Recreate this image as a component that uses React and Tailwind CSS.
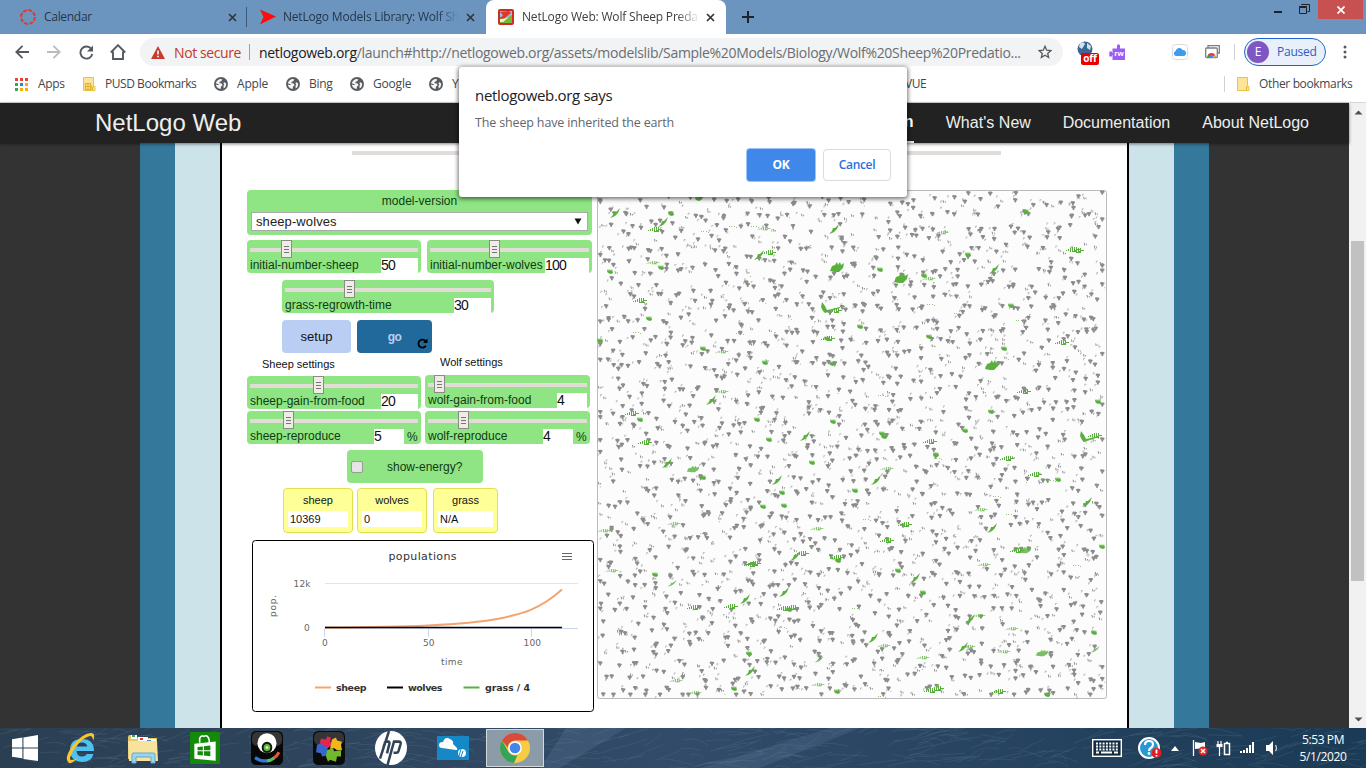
import React from "react";

const UI = "font-['Open_Sans','Noto_Sans',sans-serif]";
const ARIAL = "font-['Liberation_Sans',Arial,sans-serif]";

/* ---------- browser chrome ---------- */

function Close({ className = "" }) {
  return (
    <svg width="9" height="9" viewBox="0 0 9 9" className={className}>
      <path d="M1 1l7 7M8 1l-7 7" stroke="#30363c" strokeWidth="1.7" />
    </svg>
  );
}

function TabStrip() {
  return (
    <div className="flex h-[34px] items-stretch bg-[#6b95bf] text-[12px] text-[#25364a]">
      <div className="flex w-[247px] items-center pl-[20px]">
        <svg width="16" height="16" viewBox="0 0 16 16">
          <circle cx="8" cy="8" r="6.9" fill="none" stroke="#e0382b" strokeWidth="2" strokeDasharray="3.9 1.52" />
        </svg>
        <span className="ml-[8px] w-[180px] tracking-[-0.3px]">Calendar</span>
        <Close className="ml-[4px]" />
        <span className="ml-auto h-[20px] w-px bg-[#3d5a7a]" />
      </div>
      <div className="flex w-[239px] items-center pl-[12px]">
        <svg width="17" height="16" viewBox="0 0 17 16">
          <path d="M1 0.500L17 7.500L1 15.500L4.500 8z" fill="#fb0d0d" />
        </svg>
        <span className="ml-[7px] w-[176px] overflow-hidden whitespace-nowrap tracking-[-0.2px] [mask-image:linear-gradient(to_right,black_155px,transparent_176px)]">
          NetLogo Models Library: Wolf Sh
        </span>
        <Close className="ml-[7px]" />
      </div>
      <div className="flex w-[240px] items-center rounded-t-[8px] bg-white pl-[12px] text-[#3c4043]">
        <svg width="16" height="16" viewBox="0 0 16 16">
          <rect width="16" height="16" rx="2" fill="#cf2d22" />
          <path d="M2 2h12v5L8 10L2 8z" fill="#87c3e8" />
          <path d="M2 9q6 1 12-3v8H2z" fill="#75b832" />
          <path d="M2 10q5 0 9-2l-6 5H2z" fill="#eef4df" />
          <path d="M2 3l9-1 2 2-6 5-5 1 3-4z" fill="#e5352a" />
        </svg>
        <span className="ml-[8px] w-[178px] overflow-hidden whitespace-nowrap tracking-[-0.18px] [mask-image:linear-gradient(to_right,black_155px,transparent_178px)]">
          NetLogo Web: Wolf Sheep Preda
        </span>
        <Close className="ml-[6px]" />
      </div>
      <svg width="12" height="12" viewBox="0 0 12 12" className="mt-[11px] ml-[16px]">
        <path d="M6 0v12M0 6h12" stroke="#1d232b" strokeWidth="2" />
      </svg>
      <div className="ml-auto flex items-start">
        <svg width="36" height="19" viewBox="0 0 36 19" fill="none" stroke="#1e2227">
          <path d="M0 12h8" strokeWidth="2" />
          <path d="M25.500 7.500h7v6h-7zM25 6.500h8" />
          <path d="M27.500 5v-0.500h8v7h-2" />
        </svg>
        <div className="ml-[8px] flex h-[19px] w-[45px] items-center justify-center bg-[#c75050]">
          <svg width="8" height="8" viewBox="0 0 8 8">
            <path d="M0.500 0.500l7 7M7.500 0.500l-7 7" stroke="#fff" strokeWidth="1.800" />
          </svg>
        </div>
        <span className="w-[3px]" />
      </div>
    </div>
  );
}

function Toolbar() {
  return (
    <div className="flex h-[36px] items-center bg-white">
      <svg width="14" height="14" viewBox="0 0 14 14" fill="none" stroke="#55595e" strokeWidth="1.800" className="ml-[15px]">
        <path d="M14 7H1.500M7.500 0.800L1.300 7l6.200 6.200" />
      </svg>
      <svg width="14" height="14" viewBox="0 0 14 14" fill="none" stroke="#babcbe" strokeWidth="1.800" className="ml-[18px]">
        <path d="M0 7h12.500M6.500 0.800L12.700 7l-6.200 6.200" />
      </svg>
      <svg width="15" height="15" viewBox="0 0 15 15" className="ml-[18px]">
        <path d="M12.300 4A6 6 0 1 0 13.300 9" fill="none" stroke="#55595e" strokeWidth="1.900" />
        <path d="M14 0.500v6H8z" fill="#55595e" />
      </svg>
      <svg width="16" height="16" viewBox="0 0 16 16" className="ml-[16px]">
        <path d="M0.800 8.500L8 1.200l7.200 7.300M3 7.500V15h10V7.500" fill="none" stroke="#55595e" strokeWidth="1.900" />
      </svg>
      <div className="ml-[14px] flex h-[28px] w-[923px] items-center rounded-full bg-[#f1f3f4] pl-[11px] text-[14px] text-[#6a6e73]">
        <svg width="14" height="13" viewBox="0 0 14 13">
          <path d="M7 0l7 13H0z" fill="#c93a2c" />
          <path d="M7 4.500v4M7 9.800v1.500" stroke="#fff" strokeWidth="1.600" />
        </svg>
        <span className="ml-[9px] w-[66px] whitespace-nowrap tracking-[-0.4px] text-[#c5362a]">Not secure</span>
        <span className="ml-[9px] h-[16px] w-px bg-[#9b9fa3]" />
        <span className="ml-[9px] w-[762px] whitespace-nowrap tracking-[-0.31px]">
          <span className="text-[#202124]">netlogoweb.org</span>
          /launch#http://netlogoweb.org/assets/modelslib/Sample%20Models/Biology/Wolf%20Sheep%20Predatio...
        </span>
        <svg width="14" height="14" viewBox="0 0 14 14" className="ml-[17px]">
          <path d="M7 1.300l1.700 3.900 4.200.4-3.200 2.800.95 4.100L7 10.300l-3.650 2.200.95-4.100L1.100 5.600l4.200-.4z" fill="none" stroke="#55595e" strokeWidth="1.300" />
        </svg>
      </div>
      <div className="relative ml-[14px] h-[22px] w-[22px]">
        <svg width="16" height="16" viewBox="0 0 16 16">
          <circle cx="8" cy="8" r="7.500" fill="#3c6795" />
          <path d="M3 2q4-2 5 1L5 8 2 6zM10 2l4 3-1 4-3-2z" fill="#d5e1ec" />
        </svg>
        <span className="absolute top-[12px] left-[4px] flex h-[12px] w-[18px] items-center justify-center rounded-[2px] bg-[#e80000] pb-px text-[10px] font-bold tracking-[-0.2px] text-white">off</span>
      </div>
      <svg width="16" height="16" viewBox="0 0 16 16" className="ml-[10px]">
        <path d="M3.500 4.500H8V1.800a1.500 1.500 0 0 1 3 0v2.700h5V16H3.500v-5H3v1.500H0.300V7.500H3V9h.5z" fill="#9c5cf5" />
        <text x="5.300" y="11.500" fontSize="8" fontWeight="700" fill="#fff" fontFamily="Liberation Sans, sans-serif">rw</text>
      </svg>
      <svg width="16" height="16" viewBox="0 0 16 16" className="ml-[47px]">
        <rect x="0.500" y="0.500" width="15" height="15" rx="3" fill="#fff" stroke="#d8dbde" />
        <path d="M4 12a2.500 2.500 0 0 1-.3-4.900 3.600 3.600 0 0 1 6.800-1 3.100 3.100 0 0 1 1.700 5.900z" fill="#3e9ced" />
      </svg>
      <svg width="15" height="14" viewBox="0 0 15 14" className="ml-[17px]">
        <path d="M3 3V0.700h11.300V8H12" fill="none" stroke="#7c7f82" strokeWidth="1.300" />
        <rect x="0.700" y="3" width="11.600" height="9.500" rx="1" fill="#fff" stroke="#7c7f82" strokeWidth="1.300" />
        <path d="M2.500 12a4 4 0 0 1 8 0z" fill="#de4335" />
        <path d="M2.500 12.500a4 4 0 0 1 1.200-3L6 12.500z" fill="#2da44e" />
        <path d="M7 12.500l2.500-2.500 1 2.500z" fill="#f5c02c" />
        <circle cx="6.500" cy="11.300" r="1.600" fill="#4285f4" />
      </svg>
      <span className="ml-[14px] h-[16px] w-px bg-[#cfd1d4]" />
      <div className="ml-[9px] flex h-[28px] w-[82px] items-center rounded-full border border-[#1d66d1] bg-[#e9f0fb] pl-[2px]">
        <span className="flex h-[22px] w-[22px] items-center justify-center rounded-full bg-[#7e57c2] text-[12px] text-white">E</span>
        <span className="ml-[8px] text-[12px] tracking-[-0.25px] text-[#285fc0]">Paused</span>
      </div>
      <svg width="4" height="14" viewBox="0 0 4 14" fill="#55595e" className="ml-[17px]">
        <circle cx="2" cy="2" r="1.500" /><circle cx="2" cy="7" r="1.500" /><circle cx="2" cy="12" r="1.500" />
      </svg>
    </div>
  );
}

function Globe({ className = "" }) {
  return (
    <svg width="14" height="14" viewBox="0 0 14 14" className={className}>
      <circle cx="7" cy="7" r="7" fill="#575b60" />
      <path d="M1.800 6.300Q2.500 3 6 1.900L8.200 2.300 7.300 4.200 5.600 4.700 5.400 6.200 7.700 6.500 8.600 8.300 7 9.500 6.600 12Q2.500 11.500 1.800 7.600L4.300 8.200 4.800 7.200zM10.600 5.200L12.300 6.800Q12.200 10 9.700 11.500L9.500 9.300 10.300 7.300 9.200 6z" fill="#f7f7f7" />
    </svg>
  );
}

function Folder({ grid, className = "" }) {
  return (
    <svg width="13" height="14" viewBox="0 0 13 14" className={className}>
      <path d="M0.500 0.500h10v9h1.500v4H0.500z" fill="#fee596" stroke="#ebc443" />
      <path d="M9.500 13V10h1" fill="none" stroke="#dfb12f" />
      {grid && <path d="M2.500 6.500h5v6h-5zM5 6v6M2.500 9.500h6M8 8v4.500" fill="none" stroke="#dfb12f" strokeWidth="1.200" />}
    </svg>
  );
}

const appDots = ["#ea4335", "#ea4335", "#ea4335", "#34a853", "#1f87f0", "#fbac00", "#34a853", "#fbac00", "#fbac00"];

function Bookmarks() {
  return (
    <div className="flex h-[33px] items-center border-b border-[#d7d8da] bg-white pb-[4px] text-[12px] tracking-[-0.1px] whitespace-nowrap text-[#43474c]">
      <div className="ml-[15px] grid grid-cols-3 gap-[2px]">
        {appDots.map((c, i) => (
          <span key={i} className="h-[3px] w-[3px]" style={{ backgroundColor: c }} />
        ))}
      </div>
      <span className="ml-[10px] w-[27px] tracking-[-0.3px]">Apps</span>
      <Folder grid className="ml-[18px]" />
      <span className="ml-[9px] w-[92px] tracking-[-0.45px]">PUSD Bookmarks</span>
      <Globe className="ml-[17px]" />
      <span className="ml-[9px] w-[31px] tracking-[-0.2px]">Apple</span>
      <Globe className="ml-[18px]" />
      <span className="ml-[9px] w-[24px] tracking-[-0.3px]">Bing</span>
      <Globe className="ml-[17px]" />
      <span className="ml-[9px] w-[40px] tracking-[-0.2px]">Google</span>
      <Globe className="ml-[16px]" />
      <span className="ml-[9px] w-[33px]">Y</span>
      <span className="mr-auto ml-[420px] tracking-[-0.4px]">VUE</span>
      <span className="mr-[12px] h-[16px] w-px bg-[#cfd1d4]" />
      <Folder />
      <span className="mr-[13px] ml-[9px] w-[94px] tracking-[-0.35px]">Other bookmarks</span>
    </div>
  );
}

function Dialog() {
  return (
    <div className="absolute top-[67px] left-[459px] z-20 flex h-[130px] w-[448px] flex-col rounded-[3px] bg-white px-[16px] pb-[16px] shadow-[0_1px_4px_1px_rgba(0,0,0,0.55)]">
      <p className="mt-[18px] text-[15px] leading-[20px] tracking-[-0.32px] text-[#202124]">netlogoweb.org says</p>
      <p className="mt-[9px] text-[12.500px] leading-[18px] tracking-[-0.15px] text-[#63676c]">The sheep have inherited the earth</p>
      <div className="mt-auto flex justify-end gap-[8px] text-[12px]">
        <button className="h-[32px] w-[68px] rounded-[3px] bg-[#3f88ea] font-bold tracking-[-0.3px] text-white ring-1 ring-[#9fc4f7]">OK</button>
        <button className="h-[32px] w-[68px] rounded-[4px] border border-[#dadce0] bg-white font-semibold tracking-[-0.35px] text-[#2a6fe0]">Cancel</button>
      </div>
    </div>
  );
}

/* ---------- model widgets ---------- */

function Slider({ className, knob, label, value, inputClass, unit }) {
  return (
    <div className={`h-[33px] shrink-0 rounded-[4px] bg-[#8fe584] px-[3px] text-[12px] text-[#123a12] ${className}`}>
      <div className="relative mt-[8px] h-[4px] bg-[#e1ddd6]">
        <div className="absolute -top-[8px] flex h-[18px] w-[11px] flex-col items-center justify-center gap-[2px] border border-[#8b8b87] bg-[#efece8]" style={{ left: knob }}>
          <span className="h-px w-[5px] bg-[#777]" />
          <span className="h-px w-[5px] bg-[#777]" />
          <span className="h-px w-[5px] bg-[#777]" />
        </div>
      </div>
      <div className="mt-[6px] flex h-[15px] items-stretch whitespace-nowrap">
        <span className="mr-auto leading-[14px]">{label}</span>
        <span className={`bg-white text-[14px] leading-[15px] tracking-[-0.8px] text-[#111] ${inputClass}`}>{value}</span>
        {unit && <span className="ml-[3px] w-[11px] leading-[16px]">{unit}</span>}
      </div>
    </div>
  );
}

function Monitor({ className, name, value }) {
  return (
    <div className={`h-[45px] rounded-[4px] border border-[#e3e04d] bg-[#ffff98] px-[4px] text-[11px] text-[#111] ${className}`}>
      <div className="mt-[4px] text-center leading-[15px]">{name}</div>
      <div className="mt-[3px] h-[16px] bg-white pl-[2px] leading-[16px]">{value}</div>
    </div>
  );
}

function Plot() {
  return (
    <svg width="342" height="172" viewBox="0 0 342 172" className="mt-[7px] ml-[5px]" fontFamily="'DejaVu Sans', sans-serif" fontSize="9" fill="#666">
      <rect x="0.500" y="0.500" width="341" height="171" rx="3" fill="#fff" stroke="#000" />
      <text x="136.500" y="20" fontSize="11" fill="#333" textLength="68">populations</text>
      <path d="M310 13.500h10M310 16.500h10M310 19.500h10" stroke="#666" />
      <path d="M73 43.500h253" stroke="#e3e3e3" />
      <path d="M72.500 97V88.500H326M176.500 88v9M279.500 88v9" fill="none" stroke="#ccd6eb" />
      <text x="41.500" y="47" textLength="17">12k</text>
      <text x="52" y="91">0</text>
      <text x="70" y="106">0</text>
      <text x="171" y="106" textLength="11.500">50</text>
      <text x="271.500" y="106" textLength="17.500">100</text>
      <text x="189" y="125" textLength="21.500">time</text>
      <text transform="translate(23.500 77) rotate(-90)" textLength="22">pop.</text>
      <path d="M73 87.500C110 87.300 145 87 176 85.500C205 84 225 82.700 245 79C270 74 287 70 310 49.500" fill="none" stroke="#f4a470" strokeWidth="2" />
      <path d="M73 87.500h237" stroke="#000" strokeWidth="1.500" />
      <path d="M63 147.500h16" stroke="#f4a470" strokeWidth="2" />
      <path d="M135 147.500h16" stroke="#000" strokeWidth="2" />
      <path d="M211.500 147.500h16" stroke="#59b03c" strokeWidth="2" />
      <g fontWeight="700" fill="#333" fontSize="9.500">
        <text x="84" y="151" textLength="30.500">sheep</text>
        <text x="156" y="151" textLength="34.500">wolves</text>
        <text x="233" y="151" textLength="45">grass / 4</text>
      </g>
    </svg>
  );
}

/* [x, y, kind] of grazing patches; kinds: 0 fleck, 1 small, 2 streak, 3 big, 4 diagonal, 5 corner */
const patches = [
  [18, 24, 4], [58, 40, 2], [66, 33, 4], [74, 23, 1], [101, 8, 1], [108, 41, 0], [136, 36, 0], [158, 36, 0], [167, 39, 2, 1],
  [237, 40, 4], [172, 63, 2], [162, 66, 4], [56, 73, 2, 1], [64, 77, 1], [13, 81, 1], [240, 77, 3], [283, 79, 1], [304, 88, 3],
  [327, 85, 1], [332, 89, 2, 1], [345, 43, 2, 1], [371, 64, 1], [397, 80, 4], [429, 21, 1], [476, 60, 2], [480, 61, 2], [229, 118, 5],
  [238, 121, 2], [263, 136, 1], [231, 149, 2], [230, 148, 1], [334, 114, 0], [414, 115, 1], [423, 130, 0], [361, 123, 0], [332, 146, 1],
  [407, 158, 1], [395, 175, 3], [465, 153, 2], [494, 137, 0], [43, 111, 2], [52, 128, 1], [40, 142, 0], [3, 150, 1], [143, 143, 0],
  [125, 162, 2, 1], [106, 158, 1], [168, 172, 1], [235, 173, 1], [125, 202, 2, 1], [114, 211, 4], [35, 224, 2], [43, 229, 1],
  [160, 229, 1], [236, 231, 1], [172, 249, 1], [208, 247, 4], [285, 243, 1], [287, 246, 1], [333, 252, 2], [368, 240, 1], [488, 247, 5],
  [498, 246, 2], [427, 202, 2], [394, 221, 1], [501, 211, 1], [285, 205, 0], [48, 253, 2], [70, 274, 4], [96, 279, 3, 1], [106, 287, 1],
  [180, 291, 4], [185, 302, 1], [187, 315, 1], [166, 316, 1], [215, 272, 1], [279, 291, 4], [258, 300, 1], [290, 279, 2, 1],
  [339, 264, 1], [341, 268, 0], [410, 269, 2], [438, 285, 2], [455, 290, 0], [490, 313, 4], [384, 320, 2, 1], [413, 324, 0],
  [308, 335, 2], [290, 351, 2], [395, 339, 4], [428, 360, 3, 1], [420, 361, 2], [505, 356, 1], [77, 334, 2, 1], [107, 343, 0], [7, 341, 2, 1],
  [15, 381, 2, 1], [58, 384, 1], [75, 394, 4, 1], [157, 374, 2], [154, 375, 2], [205, 364, 2], [198, 367, 4], [240, 368, 2], [241, 370, 1],
  [220, 339, 2, 1], [301, 380, 1], [318, 389, 4], [326, 402, 1], [97, 418, 2], [187, 403, 4], [187, 419, 2], [195, 418, 2], [192, 419, 1],
  [134, 417, 2], [148, 410, 4], [259, 418, 0], [373, 430, 4], [382, 426, 2, 1], [415, 439, 2, 1], [366, 458, 4], [372, 457, 2, 1],
  [276, 449, 4], [287, 456, 2, 1], [222, 470, 4, 1], [221, 495, 2, 1], [153, 482, 4], [152, 463, 1], [334, 501, 2], [340, 499, 2], [402, 502, 2],
  [450, 504, 1], [445, 463, 3, 1], [407, 462, 2, 1], [498, 460, 4, 1], [497, 442, 1], [387, 375, 2, 1], [480, 375, 0], [137, 498, 1],
  [285, 506, 0], [400, 306, 0], [270, 329, 0], [326, 468, 2, 1], [79, 491, 2, 1], [98, 503, 2, 1], [240, 501, 1], [186, 437, 0], [461, 289, 1],
];

function buildField() {
  let s = 90210;
  const r = () => {
    s = (s * 1664525 + 1013904223) % 4294967296;
    return s / 4294967296;
  };
  let body = "";
  let dim = "";
  let flecks = "";
  const n1 = (v) => v.toFixed(1);
  const cols = 44;
  const step = 508 / cols;
  for (let i = 0; i < cols; i++) {
    for (let j = 0; j < cols; j++) {
      const x = Math.min(503, Math.max(1, (j + r() * 1.5 - 0.25) * step));
      const y = Math.min(503, Math.max(1, (i + r() * 1.5 - 0.25) * step));
      const kind = r();
      if (kind < 0.74) {
        body += `M${n1(x)} ${n1(y)}l1.200-.5 2.200.1 1.200.6-.3 1.300-.9.6-.2 1.200-.9.800-.9-.9-.2-1.200-1-.6z`;
      } else {
        body += `M${n1(x)} ${n1(y)}l1 0 .5 2.200-.8.7zM${n1(x + 2)} ${n1(y + 1)}l1.200 0-.3 2.200z`;
      }
      if (r() < 0.75) {
        const a = r() * 9 - 5;
        const b = r() * 9 - 5;
        dim += `M${n1(x + a)} ${n1(y + b)}h1.700v1.100h-1v1.200h-1z`;
      }
      if (r() < 0.08) flecks += `M${n1(x + r() * 5)} ${n1(y + r() * 5)}h1v1h-1z`;
    }
  }
  return { body, dim, flecks };
}

const field = buildField();

const patchShapes = [
  "M-4 0h1v1h-1zM-2 0h1v1h-1zM1 0h1v1h-1zM3 1h1v1h-1z",
  "M-2-2l1 2 1-2 1 2 1-2 1 4-2 1-3-1-1-2z",
  "M-7 1v-1h1v1h1v-2h1v2h1v-3h1v3h1v-4h1v4h1v-4h1v3h1v-3h1v2h3v1h-3v2h-5v-1z",
  "M-7 4l2-5 3-1 2-3 1 3 2-3 1 3 3-2-1 5-4 4-4 0z",
  "M-5 4l3-3 1-3 2 0 4-4-2 5-3 3-2 1z",
  "M-4-6l3 4 2 4 5-1 8-2v1l-12 4-3 1-2-2-2-4z",
];

function World() {
  return (
    <svg width="510" height="509" viewBox="0 0 510 509" className="mt-[47px] shrink-0">
      <rect x="0.500" y="0.500" width="509" height="508" rx="2" fill="#fcfcfc" stroke="#bbb" />
      <path d={field.dim} fill="#9a9a9a" opacity="0.65" />
      <path d={field.body} fill="#8c8c8c" />
      <path d={field.flecks} fill="#8dca79" />
      {patches.map(([x, y, k, thin], i) => (
        <path key={i} d={patchShapes[k]} fill={k === 0 ? "#8dca79" : "#59b03c"} opacity={thin ? 0.8 : 1} transform={`translate(${x} ${y})${thin ? " scale(.9 .65)" : ""}`} />
      ))}
    </svg>
  );
}

function Widgets() {
  return (
    <div className="flex w-[350px] shrink-0 flex-col pt-[47px]">
      <div className="h-[45px] w-[345px] rounded-[4px] bg-[#8fe584] px-[4px] text-center text-[12px] text-[#123a12]">
        <div className="pt-[4px] leading-[14px]">model-version</div>
        <div className="mt-[4px] flex h-[19px] items-center justify-between border border-[#aaa] bg-white pr-[5px] pl-[4px] text-[13px] text-[#222]">
          <span className="tracking-[0.1px]">sheep-wolves</span>
          <svg width="8" height="7" viewBox="0 0 8 7"><path d="M0.500 0.500h7L4 6.500z" fill="#111" /></svg>
        </div>
      </div>
      <div className="mt-[5px] flex gap-[6px]">
        <Slider className="w-[174px]" knob={31} label="initial-number-sheep" value="50" inputClass="w-[37px]" />
        <Slider className="w-[165px]" knob={59} label="initial-number-wolves" value="100" inputClass="w-[44px]" />
      </div>
      <Slider className="mt-[7px] ml-[35px] w-[212px]" knob={59} label="grass-regrowth-time" value="30" inputClass="w-[37px]" />
      <div className="mt-[7px] ml-[35px] flex gap-[6px] text-[13px]">
        <div className="flex h-[33px] w-[69px] items-center justify-center rounded-[4px] bg-[#bacef4] text-[#111]">setup</div>
        <div className="relative flex h-[33px] w-[75px] items-center justify-center rounded-[4px] bg-[#20699a] text-[12px] font-bold tracking-[-0.5px] text-[#bacef4]">
          go
          <svg width="11" height="11" viewBox="0 0 11 11" className="absolute right-[4px] bottom-[4px]">
            <path d="M8.500 3A4 4 0 1 0 8.800 7.800" fill="none" stroke="#000" strokeWidth="1.800" />
            <path d="M10.500 0.500v4.500H6z" fill="#000" />
          </svg>
        </div>
      </div>
      <div className="flex h-[22px] text-[11px] text-[#111]">
        <span className="mt-[4px] ml-[15px] w-[178px] leading-[14px]">Sheep settings</span>
        <span className="mt-[2px] leading-[14px]">Wolf settings</span>
      </div>
      <div className="flex gap-[4px]">
        <div className="mt-px flex flex-col gap-[2px]">
          <Slider className="w-[174px]" knob={63} label="sheep-gain-from-food" value="20" inputClass="w-[37px]" />
          <Slider className="w-[174px]" knob={33} label="sheep-reproduce" value="5" inputClass="w-[30px]" unit="%" />
        </div>
        <div className="flex flex-col gap-[3px]">
          <Slider className="w-[165px]" knob={6} label="wolf-gain-from-food" value="4" inputClass="w-[30px]" />
          <Slider className="w-[165px]" knob={30} label="wolf-reproduce" value="4" inputClass="w-[30px]" unit="%" />
        </div>
      </div>
      <div className="mt-[6px] ml-[100px] flex h-[33px] w-[136px] items-center rounded-[4px] bg-[#8fe584] pl-[4px] text-[12px] text-[#123a12]">
        <span className="h-[12px] w-[12px] rounded-[2px] border border-[#9a9a9a] bg-[#e5e5e5]" />
        <span className="ml-[24px]">show-energy?</span>
      </div>
      <div className="mt-[5px] ml-[36px] flex">
        <Monitor className="w-[70px]" name="sheep" value="10369" />
        <Monitor className="ml-[4px] w-[70px]" name="wolves" value="0" />
        <Monitor className="ml-[6px] w-[65px]" name="grass" value="N/A" />
      </div>
      <Plot />
    </div>
  );
}

function Page() {
  return (
    <div className={`flex h-[625px] ${ARIAL}`}>
      <div className="flex w-[1349px] flex-col bg-[#333]">
        <div className="z-10 flex h-[40px] shrink-0 items-center bg-[#222] text-[#eee] shadow-[0_1px_3px_rgba(0,0,0,0.5)]">
          <span className="ml-[95px] text-[24px]">NetLogo Web</span>
          <nav className="mr-[40px] ml-auto flex gap-[32px] text-[16px] whitespace-nowrap">
            <span className="flex h-[40px] items-center border-b-2 border-[#cde3ea] font-bold text-white">NetLogo in</span>
            <span className="flex w-[85px] items-center tracking-[0.05px]">What's New</span>
            <span className="flex items-center">Documentation</span>
            <span className="flex items-center">About NetLogo</span>
          </nav>
        </div>
        <div className="ml-[140px] flex h-[585px] w-[1069px] bg-[#34789b] px-[35px]">
          <div className="flex w-full bg-[#cde3ea] px-[45px]">
            <div className="flex w-full flex-col border-x-2 border-black bg-white">
              <div className="mt-[8px] ml-[130px] -mb-[12px] h-[4px] w-[649px] shrink-0 bg-[#e1dcd8]" />
              <div className="flex pl-[25px]">
                <Widgets />
                <World />
              </div>
            </div>
          </div>
        </div>
      </div>
      <div className="flex w-[17px] flex-col items-center bg-[#f1f1f1]">
        <svg width="9" height="5" viewBox="0 0 9 5" className="mt-[7px] ml-px"><path d="M0.500 4.500h8L4.500 0.500z" fill="#505050" /></svg>
        <div className="mt-[126px] h-[340px] w-[13px] bg-[#c1c1c1]" />
        <svg width="9" height="5" viewBox="0 0 9 5" className="mt-auto mb-[6px] ml-px"><path d="M0.500 0.500h8L4.500 4.500z" fill="#505050" /></svg>
      </div>
    </div>
  );
}

/* ---------- taskbar ---------- */

function buildStreaks() {
  let s = 77;
  const r = () => {
    s = (s * 1664525 + 1013904223) % 4294967296;
    return s / 4294967296;
  };
  let d = "";
  for (let i = 0; i < 330; i++) {
    const x = Math.round(r() * 1366);
    const y = Math.round(r() * 40);
    d += `M${x} ${y}q${Math.round(r() * 16)} ${Math.round(-r() * 5)} ${Math.round(12 + r() * 28)} ${Math.round(r() * 20 - 13)}`;
  }
  return d;
}
const streaks = buildStreaks();

function Taskbar() {
  return (
    <div className="relative flex h-[40px] items-center overflow-hidden bg-linear-to-r from-[#2b3f53] via-[#314b69] to-[#1a3a55] text-white">
      <svg width="1366" height="40" className="absolute inset-0">
        <path d="M540 40L566 0h60L560 40zM700 40L830 0h30L760 40z" fill="#587494" opacity="0.3" />
        <path d={streaks} fill="none" stroke="#7899a4" strokeOpacity="0.16" />
      </svg>
      <div className="relative flex h-full w-full items-center">
        <svg width="26" height="27" viewBox="0 0 25 26" className="ml-[12px]" fill="#fff">
          <path d="M0 4l10-1.500V12H0zM11 2.300L25 0v12H11zM0 13h10v9.500L0 21zM11 13h14v12l-14-2z" />
        </svg>
        <svg width="30" height="32" viewBox="0 0 30 32" className="ml-[28px]">
          <path d="M28 19H10.500q.5 5.500 5.500 5.500 3.500 0 5-2.500h6.500q-2 8-11.500 8Q4 29 4 18 4 7 16 7q12 0 12 12zM10.700 14.500h10.600q-1-4-5.300-4t-5.300 4z" fill="#4fc0f2" />
          <path d="M3 31Q-3 27 7 13 18 0 26 1q4 1 1 8 0-5-3-5-7 1-15 12-7 11-4 12 3 0 7-2-6 6-9 5z" fill="#f8c52b" />
        </svg>
        <svg width="32" height="32" viewBox="0 0 32 32" className="ml-[31px]">
          <path d="M1 5q0-2 2-2h6l2 3h19v21H1z" fill="#e6c66d" />
          <path d="M4 3h6v4H4zM11 5h10v4H11zM20 7h9v4h-9z" fill="#fff" />
          <path d="M5 3h3v2H5z" fill="#3bad4a" /><path d="M13 6h3v2h-3z" fill="#e13c30" /><path d="M20 8h4v2h-4z" fill="#3291d0" />
          <path d="M1 9h29l1 20H2z" fill="#f8e39d" />
          <path d="M5 31V22q0-1 2-1h19q2 0 2 1v9h-4v-6H9v6z" fill="#9ad5ee" stroke="#63a8ce" />
        </svg>
        <svg width="30" height="32" viewBox="0 0 28 30" className="ml-[31px]">
          <rect width="28" height="30" fill="#138b09" />
          <path d="M9 10V6q1-3 4-2 4-2 5 4v3" fill="none" stroke="#fff" strokeWidth="1.500" />
          <path d="M4 11l20-2v18L4 25z" fill="#fff" />
          <path d="M7 14l5-.5V17H7zM13 13.400l6-.7V17h-6zM7 18h5v4l-5-.5zM13 18h6v4.700l-6-.7z" fill="#138b09" />
        </svg>
        <svg width="32" height="34" viewBox="0 0 32 32" preserveAspectRatio="none" className="ml-[31px]">
          <rect width="32" height="32" rx="5" fill="#080808" />
          <rect x="1" y="1" width="30" height="13" rx="5" fill="#353535" />
          <path d="M4 25q6 4 13 3" fill="none" stroke="#3279dc" strokeWidth="3" />
          <path d="M22 26q4-2 6-6" fill="none" stroke="#e95635" strokeWidth="3" />
          <path d="M16 28q4 0 7-2.500" fill="none" stroke="#49c65c" strokeWidth="3" />
          <circle cx="16" cy="11.500" r="9.500" fill="#fff" /><circle cx="16" cy="15.500" r="5.300" fill="#171717" /><circle cx="16" cy="15.500" r="3.300" fill="#61bc37" />
          <circle cx="16" cy="15.500" r="1.200" fill="#e9ffd9" />
        </svg>
        <svg width="32" height="34" viewBox="0 0 32 32" preserveAspectRatio="none" className="ml-[30px]">
          <rect width="32" height="32" rx="5" fill="#0b0b0b" /><rect x="1" y="1" width="30" height="12" rx="5" fill="#343434" />
          <path d="M8 7l5 1 1-3 4 1-1 4 3 2-5 4-7-2-1-4z" fill="#e5244f" />
          <path d="M19 8l4-2 1 3 5 1-1 3 1 5-5 0-3-2-4 1 1-5z" fill="#f4b719" />
          <path d="M4 13l5-2 1 3 5 1-1 5 1 3-6 1-1-3-5-1z" fill="#3567cd" />
          <path d="M14 18l6-2 1 3 7-1 0 6-4 0-1 5-6-2-2 2-2-5z" fill="#72b82b" />
        </svg>
        <svg width="32" height="34" viewBox="0 0 32 32" preserveAspectRatio="none" className="ml-[30px]">
          <circle cx="16" cy="16" r="16" fill="#fff" />
          <path d="M14 0L5 26M7.500 19l2-7q.5-2 2-2h1.500q2 0 1.300 2.300L12 21M23 10h-4l-6.500 22M18.500 20.500h3q1.500 0 2-1.500l2-6.500q.7-2.500-1.500-2.500h-3" fill="none" stroke="#314357" strokeWidth="2.500" />
        </svg>
        <svg width="32" height="24" viewBox="0 0 32 24" className="ml-[30px]">
          <rect width="32" height="24" fill="#1588c7" />
          <path d="M5 12q-3 0-3-3t4-3q2-6 7-3 4 2 3 5l4 4q1 2-1 2z" fill="#fff" />
          <circle cx="25" cy="17" r="4" fill="#fff" /><path d="M24 13l-2 7M26 15l-2 6" stroke="#1588c7" />
        </svg>
        <div className="ml-[17px] flex h-[38px] w-[58px] items-center justify-center border border-[#d3dadd] bg-[#8b9ba7]">
          <svg width="30" height="30" viewBox="0 0 30 30">
            <circle cx="15" cy="15" r="15" fill="#f8cb45" />
            <path d="M2 7.500A15 15 0 0 1 28 7.500H15Q8 8 8 15z" fill="#d94b3d" />
            <path d="M2 7.500L8.500 19q4 5 9 3L14 30A15 15 0 0 1 2 7.500z" fill="#36a35a" />
            <circle cx="15" cy="15" r="6.800" fill="#fff" /><circle cx="15" cy="15" r="5.300" fill="#4285ed" />
          </svg>
        </div>
        <svg width="30" height="18" viewBox="0 0 30 18" className="ml-auto">
          <rect x="0.700" y="0.700" width="28.600" height="16.600" fill="#132a40" stroke="#fff" strokeWidth="1.400" />
          <path d="M4 4.500h22M4 7.500h22M4 10.500h22" stroke="#fff" strokeWidth="2" strokeDasharray="2 1.300" />
          <path d="M4 13.500h3M9 13.500h11M22 13.500h4" stroke="#fff" strokeWidth="2" />
        </svg>
        <svg width="24" height="22" viewBox="0 0 24 22" className="ml-[16px]">
          <circle cx="11" cy="11" r="10" fill="#2997d4" stroke="#fff" strokeWidth="2" />
          <path d="M7 8q0-4 4-4t4 3.500q0 2-2 3.200-2 1.100-2 3.300" fill="none" stroke="#fff" strokeWidth="2.200" /><circle cx="11" cy="16.500" r="1.400" fill="#fff" />
          <circle cx="18.500" cy="16" r="5" fill="#df1f1f" /><path d="M18.500 12.500v4M18.500 18v1.500" stroke="#fff" strokeWidth="1.800" />
        </svg>
        <svg width="8" height="5" viewBox="0 0 8 5" className="ml-[9px]"><path d="M0 5h8L4 0z" fill="#fff" /></svg>
        <svg width="16" height="16" viewBox="0 0 16 16" className="ml-[13px]">
          <path d="M1.500 0v16" stroke="#fff" strokeWidth="1.300" /><path d="M3 2l6 1 4-1v6L3 9z" fill="#fff" />
          <circle cx="11" cy="11" r="4.500" fill="#df2929" /><path d="M9 9l4 4M13 9l-4 4" stroke="#fff" strokeWidth="1.500" />
        </svg>
        <svg width="15" height="15" viewBox="0 0 15 15" className="ml-[8px]" fill="none" stroke="#fff">
          <path d="M2 0v3M5 0v3M3.500 6v9" strokeWidth="1.200" /><path d="M0.500 3h6v3h-6z" fill="#fff" stroke="none" />
          <path d="M8.500 2.500h5v11h-5zM10 1.500h2" strokeWidth="1.500" />
        </svg>
        <svg width="15" height="12" viewBox="0 0 15 12" className="ml-[9px]" fill="#fff"><path d="M0 9h2v2H0zM3 8h2v3H3zM6 6h2v5H6zM9 3h2v8H9zM12 0h2v11h-2z" /></svg>
        <svg width="13" height="14" viewBox="0 0 13 14" className="ml-[11px]">
          <path d="M0 4h3l4-4v14l-4-4H0z" fill="#fff" /><path d="M9.500 4q2 3 0 6" fill="none" stroke="#c9d3dc" strokeWidth="1.200" />
        </svg>
        <div className="mr-[19px] ml-[20px] w-[48px] text-center text-[12px] leading-[17px] tracking-[-0.4px] whitespace-nowrap">
          <div>5:53 PM</div>
          <div>5/1/2020</div>
        </div>
      </div>
    </div>
  );
}

export default function App() {
  return (
    <div className={`relative h-[768px] w-[1366px] overflow-hidden bg-white ${UI}`}>
      <TabStrip />
      <Toolbar />
      <Bookmarks />
      <Page />
      <Taskbar />
      <Dialog />
    </div>
  );
}
